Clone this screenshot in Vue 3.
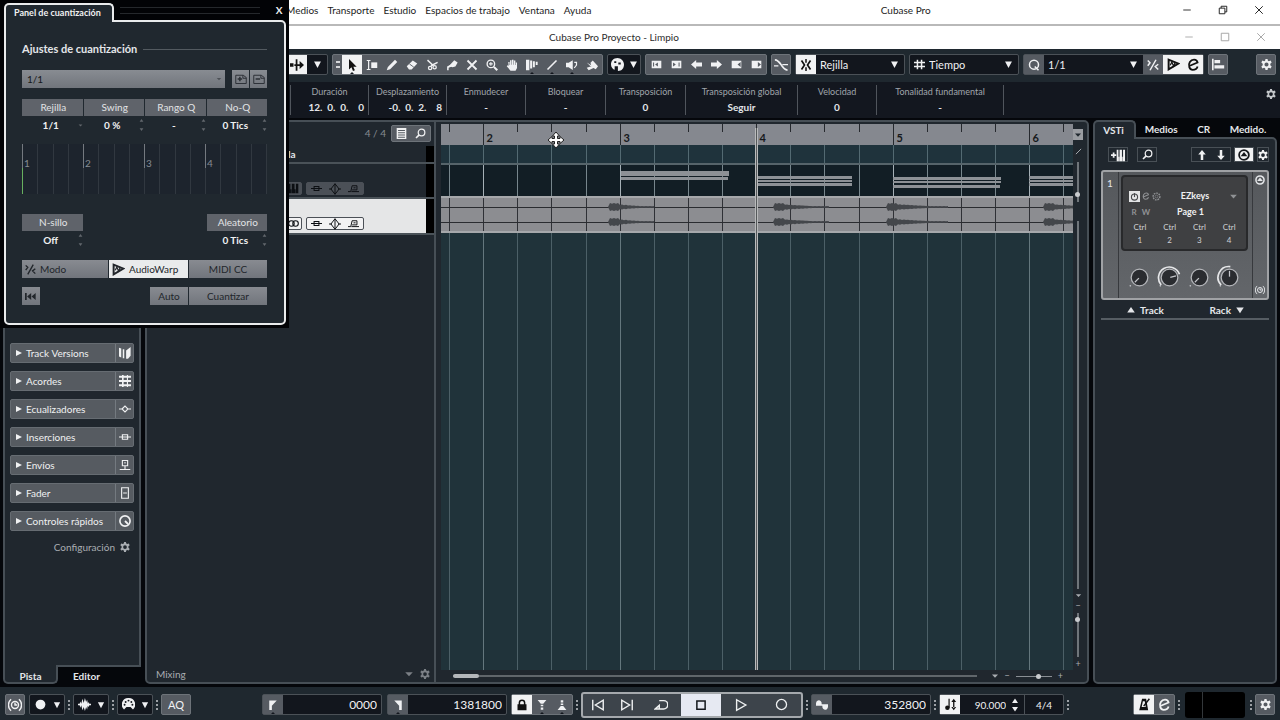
<script setup>
import { ref, computed, h, onMounted, onUnmounted } from 'vue';

const line = 'fill="none" stroke="currentColor"';

// 16x16 glyphs, drawn in the current text colour
const glyphs = {
  down: '<path d="M3 3.5h10L8 13z"/>',
  right: '<path d="M2 2l12 6-12 6z"/>',
  up: '<path d="M2 12h12L8 3z"/>',
  downWide: '<path d="M2 4h12L8 13z"/>',
  caret: '<path d="M2 5h12L8 11.5z"/>',
  autoscroll: '<path d="M0 6h4v4H0zM5 7h6V3.500L16 8l-5 4.500V9H5zM6.500 1.500h2v13h-2z"/>',
  pointer: '<path d="M4 0v14l3.300-3 2 5 2.500-1-2-4.800h4.400z"/>',
  range: `<path ${line} stroke-width="1.600" d="M1 2h5M1 14h5M3.500 2v12"/><path d="M7 4.500h8v7.500H7z"/>`,
  pencil: '<path d="M1 15l1.500-4.500L12 1l3 3L5.500 13.500z"/>',
  eraser: '<path d="M1 9.500L9 2l6 4-7.500 8H4z"/><path stroke="#575c63" stroke-width="1.200" d="M4.500 6.500l6 4.500"/>',
  scissors: `<path ${line} stroke-width="1.900" d="M2 1.500l8 7.500M15.500 4.500L6.500 9"/><circle ${line} stroke-width="1.700" cx="11.500" cy="11" r="2.200"/><circle ${line} stroke-width="1.700" cx="5.500" cy="12" r="2.200"/>`,
  glue: '<path d="M7 6l4-4.500 4.500 3-3 5.500-4 1-4-2z"/><path d="M7 7l-5.500 3V15H3.500v-3.500L8 10z"/>',
  cross: `<path ${line} stroke-width="2.400" d="M2 2l12 12M14 2L2 14"/>`,
  zoom: `<circle ${line} stroke-width="1.800" cx="6.500" cy="6.500" r="5"/><path ${line} stroke-width="2.800" d="M10.500 10.500l4.500 4.500"/><path ${line} stroke-width="1.400" d="M4 6.500h5M6.500 4v5"/>`,
  hand: '<path d="M3 4h1.800v4h.6V1.800h2V7.500H8V1h2v6.500h.6V2h1.900v6h.6V4.500h1.600V12l-2 3.500H6L1 9.500l1-1.300L3.500 9z"/>',
  comp: '<path d="M0 1h4.500v14H0zM5.500 2h2.700v10.500H5.500zM9.200 3h2.600v8H9.200zM13 3.500h2.500V8H13z"/>',
  stroke: `<path ${line} stroke-width="2.200" d="M2 14L14 2"/>`,
  speaker: `<path d="M0 5h3.500L9 1.500v13L3.500 11H0z"/><path ${line} stroke-width="1.600" d="M11 4.500h3V8l-3 4"/>`,
  paint: '<path d="M6 5l3-3 7 7.500-3 4-3-1.500-6.500 3L1 11.500l6-2z"/><path d="M1 4.500l6.500 4-1.500 1z"/>',
  palette: '<path d="M8 0C3 0 0 3.500 0 8c0 3.500 2.500 6 4.500 6.500V10h4v6c5 0 7.500-3.500 7.500-8S12 0 8 0z"/><path fill="#12161d" d="M9 5.500h3v2.500H9zM4 4h2.500v2H4z"/>',
  boxIn: '<path fill-rule="evenodd" d="M1 2.500h14v11H1zM10 5L6 8l4 3zM3 5v6h1.500V5z"/>',
  boxOut: '<path fill-rule="evenodd" d="M1 2.500h14v11H1zM3 5l4 3-4 3zM11 5v6h1.500V5z"/>',
  arrowLeft: '<path d="M0 8l7.500-6.500V5H16v6H7.500v3.500z"/>',
  arrowRight: '<path d="M16 8L8.500 1.500V5H0v6h8.500v3.500z"/>',
  trimLeft: '<path fill-rule="evenodd" d="M1 2.500h14v11H1zM14 4.500L9.500 8l4.500 3.500z"/>',
  trimRight: '<path fill-rule="evenodd" d="M1 2.500h14v11H1zM10 4.500v7L14.500 8z"/>',
  crossfade: `<path ${line} stroke-width="2" d="M1 2c4 0 6 4 8 7s4 4.500 6.500 5"/><path ${line} stroke-width="1.500" d="M9.500 7.500H16M0 9h5"/>`,
  snap: `<path ${line} stroke-width="2.200" d="M2 2l4 6-4 6M14 2l-4 6 4 6"/><path d="M7 0h2v5H7zM7 11h2v5H7z"/>`,
  hash: `<path ${line} stroke-width="2.200" d="M5 1v14M11 1v14M0 5h16M0 11h16"/>`,
  q: `<circle ${line} stroke-width="2" cx="8" cy="7.500" r="6"/><path ${line} stroke-width="2.200" d="M9 10l5 5"/>`,
  iterative: `<path ${line} stroke-width="2" d="M1 2l3 3-3 4M12 1L4 15M15 7l-4 3 4 4"/>`,
  warp: `<path ${line} stroke-width="2.400" d="M2 14V2l12 5z"/><path ${line} stroke-width="1.500" d="M4 9l2-4 2 5 2-4"/>`,
  e: `<path ${line} stroke-width="2.200" d="M3.500 9.500L13 5.500C12 1 6 1 3.500 5S3 14.500 7 14.500s5.500-2 6-4"/>`,
  align: '<path d="M0 1h2v14H0zM3 2.500h7v4H3zM3 9h12v4H3z"/>',
  gear: '<path fill-rule="evenodd" d="M6.500 0h3l.5 2.500 1.500.8L14 2.300 15.500 5l-2 1.800v2.400l2 1.800-1.500 2.700-2.500-1-1.500.8-.5 2.500h-3L6 13.500l-1.500-.8-2.500 1L.5 11l2-1.800V6.800L.5 5 2 2.300l2.500 1L6 2.500zM8 5a3 3 0 100 6 3 3 0 000-6z"/>',
  minimize: `<path ${line} stroke-width="1.400" d="M2 8h12"/>`,
  restore: `<path ${line} stroke-width="1.500" d="M2 5h9v9H2zM5 5V2h9v9h-3"/>`,
  maximize: `<path ${line} stroke-width="1.500" d="M2 2h12v12H2z"/>`,
  close: `<path ${line} stroke-width="1.500" d="M2 2l12 12M14 2L2 14"/>`,
  presetAdd: `<path ${line} stroke-width="1.300" d="M1 3h10l4 3v8H1zM10.500 3v4H15"/><path ${line} stroke-width="2" d="M3.500 8h6M6.500 5v6"/>`,
  presetRemove: `<path ${line} stroke-width="1.300" d="M1 3h10l4 3v8H1zM10.500 3v4H15"/><path ${line} stroke-width="2" d="M3.500 8h6"/>`,
  rewind: '<path d="M0 3h2.500v10H0zM3 8l6-5v10zM9.500 8l6-5v10z"/>',
  versions: '<path d="M0 1l3 1v12l-3-1.500zM5 3h2v12H5zM9.500 4.500L15.500 0v11.500L12 15.500H9.500z"/>',
  chords: '<path d="M0 1h16v2.600H0zM0 6.700h16v2.600H0zM0 12.400h16V15H0zM4 0h2.200v16H4zM10.500 0h1.500v16h-1.500z"/>',
  eq: `<path ${line} stroke-width="1.500" d="M0 8h4M12 8h4M4 8l4-4 4 4-4 4z"/>`,
  insert: `<path ${line} stroke-width="1.500" d="M0 8h4.500M11.500 8H16M4.500 5h7v6h-7zM5 8h6"/>`,
  send: `<path ${line} stroke-width="1.500" d="M4.500 2h7v7h-7zM8 9v5M1 14h14M8 4v2"/>`,
  fader: `<path ${line} stroke-width="1.500" d="M3.500 1h9v14h-9zM5.500 8h5"/>`,
  knob: `<circle ${line} stroke-width="2.200" cx="8" cy="8" r="6.800"/><path ${line} stroke-width="2.400" d="M8 8l4 4"/>`,
  keys: '<path fill-rule="evenodd" d="M0 1h15v14H0zM3.500 1v8h2V1zM9.500 1v8h2V1zM4.300 9v6h.5V9zM10.300 9v6h.5V9z"/>',
  addKeys: `<path ${line} stroke-width="2" d="M0 8h6M3 5v6"/><path fill-rule="evenodd" d="M6.500 2H16v13H6.500zM8.500 2v8h1.300V2zM12.500 2v8h1.300V2zM9 10v5h.4v-5zM13 10v5h.4v-5z"/>`,
  search: `<circle ${line} stroke-width="1.800" cx="9.500" cy="6.500" r="4.800"/><path ${line} stroke-width="2.400" d="M6 10l-4.500 4.500"/>`,
  list: '<path fill-rule="evenodd" d="M1 0h14v16H1zM3 3v1.500h10V3zM3 6.300v1.500h10V6.300zM3 9.500V11h10V9.500zM3 12.700V14h10v-1.300z"/>',
  arrowUp: '<path d="M8 0l6 7h-4v9H6V7H2z"/>',
  arrowDown: '<path d="M8 16l6-7h-4V0H6v9H2z"/>',
  eject: `<circle ${line} stroke-width="2.400" cx="8" cy="8" r="6.500"/><path d="M3.500 9.500h9L8 4z"/>`,
  ringGear: `<circle ${line} stroke-width="2.500" stroke-dasharray="3 1.500" cx="8" cy="8" r="6"/><circle ${line} cx="8" cy="8" r="2.500"/>`,
  channelEq: `<path ${line} stroke-width="1.300" d="M0 8h4M12 8h4M8 1l5.500 7L8 15 2.500 8zM8 1v14"/>`,
  channelSend: `<path ${line} stroke-width="1.400" d="M0 12.500h4L6 4h7v6H6M5 12.500h11M8 7h3"/>`,
  stereo: `<circle ${line} stroke-width="1.600" cx="5" cy="8" r="4"/><circle ${line} stroke-width="1.600" cx="11" cy="8" r="4"/>`,
  clock: `<circle ${line} stroke-width="1.600" cx="8" cy="8" r="4"/><path ${line} stroke-width="1.600" d="M8 5.500V8h2.500M3.500 1.500c-4 3.500-4 9.500 0 13M12.500 1.500c4 3.500 4 9.500 0 13"/>`,
  dot: '<circle cx="8" cy="8" r="6"/>',
  wave: '<path d="M0 7.200h2l1-3 1 3L5.500 1 7 6l1.500-6L10 5l1.200-3 1 5L13 5l1 2.200h2v1.600h-2L13 11l-1-1.500-.8 4.500L10 11l-1.500 5L7 11l-1.500 4L4 9l-1 3-1-3.200H0z"/>',
  midi: '<path d="M8 0a8 8 0 00-5.500 14l3-3h5l3 3A8 8 0 008 0z"/><g fill="#12161d"><circle cx="8" cy="3.200" r="1.200"/><circle cx="4.500" cy="4.800" r="1.200"/><circle cx="11.500" cy="4.800" r="1.200"/><circle cx="3.200" cy="8.200" r="1.200"/><circle cx="12.800" cy="8.200" r="1.200"/></g>',
  locLeft: '<path d="M3 2h10L6.500 9v5.500H3z"/>',
  locRight: '<path d="M13 2H3l6.500 7v5.500H13z"/>',
  lock: `<path d="M2 7h12v8H2z"/><path ${line} stroke-width="2" d="M4.500 8V5a3.500 3.500 0 017 0v3"/>`,
  punchIn: '<path d="M1 0h14L10 6H6zM6 7.500h4v2.500H6zM6 12h4v3.500H6z"/>',
  punchOut: '<path d="M1 16h14L10 9.500H6zM6 5.500h4V8H6zM6 .5h4V4H6z"/>',
  toStart: `<path ${line} stroke-width="1.600" d="M2 2v12M14 2.500v11L5 8z"/>`,
  toEnd: `<path ${line} stroke-width="1.600" d="M14 2v12M2 2.500v11L11 8z"/>`,
  cycle: `<path ${line} stroke-width="1.700" d="M6 3h5a4.200 4.200 0 010 9.500H1.500L6 8.500v4"/>`,
  stop: `<path ${line} stroke-width="2" d="M2.500 2.500h11v11h-11z"/>`,
  play: `<path ${line} stroke-width="1.600" d="M3 2l10.500 6L3 14z"/>`,
  record: `<circle ${line} stroke-width="1.600" cx="8" cy="8" r="6.200"/>`,
  sine: '<path d="M0 9V5.500C1 .5 6.500.5 7.500 5V7H16v3.500c-1 5-6.500 5-7.500.500V9z"/>',
  tempo: '<path d="M5.500 1H7v11H5.500z"/><circle cx="4.200" cy="12" r="2.800"/><path d="M12 1l3 4H9zM12 15l3-4H9zM11.200 4h1.600v8h-1.600z"/>',
  metronome: `<path fill-rule="evenodd" d="M5 1h5l2.500 14h-11zM6 4L4.500 11h5L8.300 4z"/><path ${line} stroke-width="1.800" d="M7 10l7-9"/>`,
  move: '<path fill="#fff" stroke="#222" d="M8 0l3.500 4H9.500v2.500H12v-2L16 8l-4 3.500v-2H9.500V12h2L8 16l-3.500-4h2V9.500H4v2L0 8l4-3.500v2h2.500V4h-2z"/>',
  power: `<circle ${line} stroke-width="2" cx="8" cy="9" r="5.500"/><path ${line} stroke-width="2" d="M8 2v7"/>`,
};

const Icon = (props) =>
  h('svg', {
    class: 'icon',
    viewBox: '0 0 16 16',
    width: props.size || 12,
    height: props.size || 12,
    fill: 'currentColor',
    'aria-hidden': 'true',
    innerHTML: glyphs[props.name],
  });
Icon.props = ['name', 'size'];

const menus = ['Medios', 'Transporte', 'Estudio', 'Espacios de trabajo', 'Ventana', 'Ayuda'];

const tool = ref('pointer');
const tools = [
  { icon: 'pointer', label: 'Seleccionar' },
  { icon: 'range', label: 'Rango' },
  { icon: 'pencil', label: 'Dibujar' },
  { icon: 'eraser', label: 'Borrar' },
  { icon: 'scissors', label: 'Dividir' },
  { icon: 'glue', label: 'Pegar' },
  { icon: 'cross', label: 'Enmudecer' },
  { icon: 'zoom', label: 'Zoom' },
  { icon: 'hand', label: 'Mano' },
  { icon: 'comp', label: 'Comp', more: true },
  { icon: 'stroke', label: 'Línea', more: true },
  { icon: 'speaker', label: 'Reproducir', more: true },
  { icon: 'paint', label: 'Color' },
];
const nudges = ['boxIn', 'boxOut', 'arrowLeft', 'arrowRight', 'trimLeft', 'trimRight'];

const info = [
  { label: 'Duración', value: '12.  0.  0.    0', width: 78, right: true },
  { label: 'Desplazamiento', value: '-0.  0.  2.    8', width: 78, right: true },
  { label: 'Enmudecer', value: '-', width: 79 },
  { label: 'Bloquear', value: '-', width: 80 },
  { label: 'Transposición', value: '0', width: 80 },
  { label: 'Transposición global', value: 'Seguir', width: 112 },
  { label: 'Velocidad', value: '0', width: 79 },
  { label: 'Tonalidad fundamental', value: '-', width: 127 },
];

const sections = [
  { label: 'Track Versions', icon: 'versions' },
  { label: 'Acordes', icon: 'chords' },
  { label: 'Ecualizadores', icon: 'eq' },
  { label: 'Inserciones', icon: 'insert' },
  { label: 'Envíos', icon: 'send' },
  { label: 'Fader', icon: 'fader' },
  { label: 'Controles rápidos', icon: 'knob' },
];

const quantize = [
  { label: 'Rejilla', value: '1/1', drop: true },
  { label: 'Swing', value: '0 %' },
  { label: 'Rango Q', value: '-' },
  { label: 'No-Q', value: '0 Tics' },
];

// One beat every quarter of a bar; the first visible beat is 1.4
const beatWidth = 34.125;
const timeline = ref(null);
const timelineWidth = ref(632);
const beats = computed(() =>
  Array.from({ length: Math.ceil((timelineWidth.value - 8) / beatWidth) }, (_, i) => ({
    x: Math.round(8 + i * beatWidth) + 0.5,
    bar: i % 4 === 1,
    number: Math.floor((i + 7) / 4),
  })),
);

function measure() {
  timelineWidth.value = timeline.value.clientWidth;
}
onMounted(() => {
  measure();
  window.addEventListener('resize', measure);
});
onUnmounted(() => window.removeEventListener('resize', measure));

const notes = [
  { x: 180, y: 6, w: 108, h: 5 },
  { x: 180, y: 12, w: 107, h: 3 },
  { x: 316, y: 11, w: 95, h: 3 },
  { x: 316, y: 15, w: 95, h: 2 },
  { x: 316, y: 18, w: 95, h: 3 },
  { x: 452, y: 12, w: 108, h: 3 },
  { x: 452, y: 16, w: 108, h: 2 },
  { x: 452, y: 20, w: 107, h: 3 },
  { x: 588, y: 11, w: 95, h: 3 },
  { x: 588, y: 15, w: 95, h: 2 },
  { x: 588, y: 18, w: 95, h: 3 },
];

function burst(x, y, width) {
  let top = `M${x} ${y}`;
  let bottom = '';
  for (let i = 2; i <= width; i += 2) {
    const level = i < 12 ? 4 : Math.max(1, 3.5 * (1 - i / width));
    const amp = level * (i % 4 ? 1 : 0.8);
    top += `L${x + i} ${y - amp}`;
    bottom = `L${x + i} ${y + amp}` + bottom;
  }
  return top + bottom + 'z';
}
const hits = [
  { x: 167, w: 46 },
  { x: 332, w: 56 },
  { x: 445, w: 62 },
  { x: 602, w: 50 },
];
const waves = hits.flatMap(hit => [burst(hit.x, 9, hit.w), burst(hit.x, 24, hit.w)]);

const knobs = [
  { arc: '', angle: 225 },
  { arc: 'M5 24A13 13 0 1 1 27 11', angle: 75 },
  { arc: '', angle: 225 },
  { arc: 'M5 24A13 13 0 0 1 16 2', angle: 0 },
];

const grid = ref('Rejilla');
const gridType = ref('Tiempo');
const preset = ref('1/1');
const panelOpen = ref(true);
const leftLocator = ref('0000');
const rightLocator = ref('1381800');
const position = ref('352800');
const tempo = ref('90.000');
</script>

<template>
  <div class="app">
    <header class="menubar">
      <nav class="menus">
        <a v-for="menu in menus" :key="menu" href="#">{{ menu }}</a>
      </nav>
      <span class="app-name">Cubase Pro</span>
      <div class="window-buttons">
        <button aria-label="Minimizar"><Icon name="minimize" :size="10" /></button>
        <button aria-label="Restaurar"><Icon name="restore" :size="10" /></button>
        <button aria-label="Cerrar"><Icon name="close" :size="10" /></button>
      </div>
    </header>

    <div class="titlebar">
      <h1>Cubase Pro Proyecto - Limpio</h1>
      <div class="window-buttons dim">
        <button aria-label="Minimizar proyecto"><Icon name="minimize" :size="10" /></button>
        <button aria-label="Maximizar proyecto"><Icon name="maximize" :size="10" /></button>
        <button aria-label="Cerrar proyecto"><Icon name="close" :size="10" /></button>
      </div>
    </div>

    <div class="toolbar">
      <div class="group dark">
        <button class="cell on" aria-label="Autodesplazamiento"><Icon name="autoscroll" :size="14" /></button>
        <button class="cell" aria-label="Opciones de desplazamiento"><Icon name="down" :size="11" /></button>
      </div>
      <div class="group">
        <span class="handle"></span>
        <button
          v-for="item in tools"
          :key="item.icon"
          class="cell"
          :class="{ on: tool === item.icon, more: item.more || tool === item.icon }"
          :aria-label="item.label"
          @click="tool = item.icon"
        >
          <Icon :name="item.icon" />
        </button>
      </div>
      <div class="group dark colors">
        <button class="cell" aria-label="Colores"><Icon name="palette" :size="13" /></button>
        <button class="cell narrow" aria-label="Menú de colores"><Icon name="down" :size="11" /></button>
      </div>
      <div class="group">
        <button v-for="nudge in nudges" :key="nudge" class="cell" :aria-label="nudge"><Icon :name="nudge" :size="11" /></button>
      </div>
      <div class="group">
        <button class="cell" aria-label="Fundido cruzado"><Icon name="crossfade" :size="14" /></button>
      </div>
      <div class="group dark">
        <button class="cell on" aria-label="Ajuste"><Icon name="snap" /></button>
        <label class="drop snap">
          <select v-model="grid" aria-label="Tipo de ajuste"><option>Rejilla</option></select>
          <Icon name="down" :size="11" />
        </label>
      </div>
      <div class="group dark">
        <label class="drop grid-type">
          <Icon name="hash" :size="11" />
          <select v-model="gridType" aria-label="Tipo de rejilla"><option>Tiempo</option></select>
          <Icon name="down" :size="11" />
        </label>
      </div>
      <div class="group dark">
        <button class="cell raised" aria-label="Cuantizar"><Icon name="q" /></button>
        <label class="drop preset">
          <select v-model="preset" aria-label="Preset de cuantización"><option>1/1</option></select>
          <Icon name="down" :size="11" />
        </label>
        <button class="cell raised" aria-label="Cuantización iterativa"><Icon name="iterative" /></button>
        <button class="cell on" aria-label="AudioWarp"><Icon name="warp" :size="13" /></button>
        <button class="cell on" aria-label="Abrir panel" @click="panelOpen = true"><Icon name="e" :size="13" /></button>
      </div>
      <div class="group">
        <button class="cell" aria-label="Alinear"><Icon name="align" :size="13" /></button>
      </div>
      <div class="group push">
        <button class="cell" aria-label="Configurar barra"><Icon name="gear" :size="11" /></button>
      </div>
    </div>

    <div class="infoline">
      <dl>
        <div v-for="item in info" :key="item.label" :style="{ width: item.width + 'px' }">
          <dt>{{ item.label }}</dt>
          <dd :class="{ right: item.right }">{{ item.value }}</dd>
        </div>
      </dl>
      <button class="plain" aria-label="Configurar línea de información"><Icon name="gear" :size="10" /></button>
    </div>

    <main class="workspace">
      <aside class="inspector">
        <div class="inspector-body">
          <button v-for="section in sections" :key="section.label" class="section">
            <Icon name="right" :size="8" />
            <span>{{ section.label }}</span>
            <i><Icon :name="section.icon" :size="12" /></i>
          </button>
          <button class="config">Configuración <Icon name="gear" :size="10" /></button>
        </div>
        <div class="bottom-tabs">
          <button class="active">Pista</button>
          <button>Editor</button>
        </div>
      </aside>

      <section class="project">
        <div class="tracks">
          <div class="tracks-head">
            <span>4 / 4</span>
            <div class="mini-group">
              <button aria-label="Lista de pistas"><Icon name="list" :size="11" /></button>
              <button aria-label="Buscar pistas"><Icon name="search" :size="11" /></button>
            </div>
          </div>
          <div class="track folder">la</div>
          <div class="track midi">
            <span class="chip"><Icon name="keys" :size="11" /></span>
            <span class="chip wide"><Icon name="insert" :size="11" /><Icon name="channelEq" /><Icon name="channelSend" :size="11" /></span>
          </div>
          <div class="track audio">
            <span class="chip"><Icon name="stereo" :size="11" /></span>
            <span class="chip wide"><Icon name="insert" :size="11" /><Icon name="channelEq" /><Icon name="channelSend" :size="11" /></span>
          </div>
          <div class="tracks-foot">
            <span>Mixing</span>
            <Icon name="caret" :size="10" />
            <Icon name="gear" :size="10" />
          </div>
        </div>

        <div class="arrange">
          <div ref="timeline" class="timeline">
            <svg class="ruler">
              <g v-for="beat in beats" :key="beat.x">
                <line :x1="beat.x" y1="0" :x2="beat.x" :y2="beat.bar ? 21 : 8" stroke="#26292e" />
                <text v-if="beat.bar" :x="beat.x + 3" y="18">{{ beat.number }}</text>
              </g>
            </svg>
            <svg class="lane marker">
              <line v-for="beat in beats" :key="beat.x" :x1="beat.x" y1="0" :x2="beat.x" y2="100%" stroke="#536a72" />
            </svg>
            <svg class="lane notes">
              <line v-for="beat in beats" :key="beat.x" :x1="beat.x" y1="0" :x2="beat.x" y2="100%" :stroke="beat.bar ? '#a5b0b6' : '#77868c'" />
              <rect v-for="(note, i) in notes" :key="i" :x="note.x" :y="note.y" :width="note.w" :height="note.h" fill="#8d9196" />
            </svg>
            <svg class="lane clip">
              <line v-for="beat in beats" :key="beat.x" :x1="beat.x" y1="0" :x2="beat.x" y2="100%" stroke="#2f3136" />
              <path d="M0 9.500H2000M0 24.500H2000" stroke="#2a2c30" />
              <path v-for="(wave, i) in waves" :key="i" :d="wave" fill="#44474b" />
            </svg>
            <svg class="lane empty">
              <line v-for="beat in beats" :key="beat.x" :x1="beat.x" y1="0" :x2="beat.x" y2="100%" :stroke="beat.bar ? '#64777d' : '#4c6067'" />
            </svg>
            <span class="playhead"></span>
            <span class="cursor"><Icon name="move" :size="16" /></span>
          </div>
          <div class="vzoom">
            <button class="ruler-menu" aria-label="Formato de regla"><Icon name="caret" :size="8" /></button>
            <Icon name="stroke" :size="7" />
            <span class="vline short"><b></b></span>
            <span class="vline long"></span>
            <Icon name="caret" :size="7" />
            <small>−</small>
            <span class="vline zoomer"><b></b></span>
            <small>+</small>
          </div>
          <div class="hzoom">
            <span class="hscroll"><b></b></span>
            <Icon name="caret" :size="8" />
            <small>−</small>
            <span class="hline"><b></b></span>
            <small>+</small>
          </div>
        </div>
      </section>

      <aside class="rack">
        <nav class="rack-tabs">
          <button class="active">VSTi</button>
          <button>Medios</button>
          <button>CR</button>
          <button>Medido.</button>
        </nav>
        <div class="rack-body">
          <div class="rack-tools">
            <button aria-label="Añadir instrumento"><Icon name="addKeys" :size="14" /></button>
            <button aria-label="Buscar instrumento"><Icon name="search" :size="11" /></button>
            <span class="pair">
              <button aria-label="Anterior"><Icon name="arrowUp" :size="10" /></button>
              <button aria-label="Siguiente"><Icon name="arrowDown" :size="10" /></button>
            </span>
            <button class="on" aria-label="Mostrar controles"><Icon name="eject" /></button>
            <button class="slim" aria-label="Ajustes del rack"><Icon name="gear" :size="10" /></button>
          </div>
          <article class="device">
            <span class="number">1</span>
            <div class="face">
              <div class="screen">
                <div class="screen-row">
                  <button class="lit" aria-label="Activar"><Icon name="power" :size="9" /></button>
                  <Icon name="e" :size="8" />
                  <Icon name="ringGear" :size="9" />
                  <strong>EZkeys</strong>
                  <Icon name="caret" :size="9" />
                </div>
                <div class="screen-row second">
                  <b>R</b><b>W</b><strong>Page 1</strong>
                </div>
                <ol>
                  <li v-for="n in 4" :key="n"><span>Ctrl</span><span>{{ n }}</span></li>
                </ol>
              </div>
              <div class="knobs">
                <svg v-for="(knob, i) in knobs" :key="i" viewBox="0 0 30 30" width="25" height="25">
                  <path :d="knob.arc" fill="none" stroke="#e6e7e9" stroke-width="2" />
                  <circle cx="15" cy="15" r="10" fill="#2a2c30" stroke="#b4b6ba" stroke-width="1.500" />
                  <line x1="15" y1="14" x2="15" y2="7" stroke="#c4c6ca" stroke-width="1.500" :transform="`rotate(${knob.angle} 15 15)`" />
                  <circle cx="4" cy="25" r="1" fill="#c4c6ca" />
                </svg>
              </div>
            </div>
            <div class="side">
              <Icon name="eject" :size="10" />
              <Icon name="clock" :size="10" />
            </div>
          </article>
          <div class="rack-foot">
            <button><Icon name="up" :size="10" /> Track</button>
            <button>Rack <Icon name="downWide" :size="10" /></button>
          </div>
        </div>
      </aside>
    </main>

    <footer class="transport">
      <div class="group"><button class="cell" aria-label="Compensación de retardo"><Icon name="clock" :size="14" /></button></div>
      <template v-for="mode in ['dot', 'wave', 'midi']" :key="mode">
        <div class="group dark">
          <button class="cell" :aria-label="mode"><Icon :name="mode" :size="13" /></button>
          <button class="cell narrow" :aria-label="mode + ' menú'"><Icon name="down" :size="10" /></button>
        </div>
        <span class="dots"></span>
      </template>
      <div class="group aq"><button class="cell">AQ</button></div>

      <div class="group dark locator first">
        <button class="cell raised more" aria-label="Ir al localizador izquierdo"><Icon name="locLeft" /></button>
        <input v-model="leftLocator" aria-label="Localizador izquierdo">
      </div>
      <div class="group dark locator">
        <button class="cell raised more" aria-label="Ir al localizador derecho"><Icon name="locRight" /></button>
        <input v-model="rightLocator" aria-label="Localizador derecho">
      </div>
      <div class="group">
        <button class="cell on" aria-label="Bloquear localizadores"><Icon name="lock" /></button>
        <button class="cell more" aria-label="Punch in"><Icon name="punchIn" :size="10" /></button>
        <button class="cell more" aria-label="Punch out"><Icon name="punchOut" :size="10" /></button>
      </div>
      <span class="dots"></span>
      <div class="play-controls">
        <button class="small" aria-label="Ir al inicio"><Icon name="toStart" :size="14" /></button>
        <button class="small" aria-label="Ir al final"><Icon name="toEnd" :size="14" /></button>
        <button aria-label="Ciclo"><Icon name="cycle" :size="14" /></button>
        <button class="active" aria-label="Detener"><Icon name="stop" /></button>
        <button aria-label="Reproducir"><Icon name="play" :size="14" /></button>
        <button aria-label="Grabar"><Icon name="record" :size="13" /></button>
      </div>
      <span class="dots"></span>
      <div class="group dark locator">
        <button class="cell raised" aria-label="Formato de tiempo"><Icon name="sine" /></button>
        <input v-model="position" aria-label="Posición">
      </div>
      <span class="dots"></span>
      <div class="group dark tempo">
        <button class="cell on" aria-label="Pista de tempo"><Icon name="tempo" :size="13" /></button>
        <input v-model="tempo" aria-label="Tempo">
        <span class="spin"><Icon name="up" :size="8" /><Icon name="downWide" :size="8" /></span>
        <button class="signature">4/4</button>
      </div>
      <span class="dots"></span>
      <div class="group push">
        <button class="cell on" aria-label="Metrónomo"><Icon name="metronome" :size="13" /></button>
        <button class="cell" aria-label="Ajustes de metrónomo"><Icon name="e" :size="13" /></button>
      </div>
      <span class="dots"></span>
      <div class="meter"><i></i></div>
      <span class="dots"></span>
      <div class="group"><button class="cell" aria-label="Configurar transporte"><Icon name="gear" :size="11" /></button></div>
    </footer>

    <section v-if="panelOpen" class="panel">
      <div class="panel-head">
        <h2>Panel de cuantización</h2>
        <span class="grip"></span>
        <button class="panel-close" @click="panelOpen = false">X</button>
      </div>
      <div class="panel-body">
        <h3>Ajustes de cuantización</h3>
        <div class="preset-row">
          <label class="preset-select">
            <select v-model="preset" aria-label="Preset"><option>1/1</option></select>
            <Icon name="caret" :size="6" />
          </label>
          <div class="preset-buttons">
            <button aria-label="Guardar preset"><Icon name="presetAdd" /></button>
            <button aria-label="Eliminar preset"><Icon name="presetRemove" /></button>
          </div>
        </div>
        <div class="params">
          <div v-for="item in quantize" :key="item.label" class="param">
            <span>{{ item.label }}</span>
            <button>
              <strong>{{ item.value }}</strong>
              <Icon v-if="item.drop" name="caret" :size="5" />
              <i v-else><Icon name="up" :size="5" /><Icon name="downWide" :size="5" /></i>
            </button>
          </div>
        </div>
        <div class="beat-grid">
          <span v-for="n in 16" :key="n" :class="{ strong: n % 4 === 1 }">{{ n % 4 === 1 ? (n + 3) / 4 : '' }}</span>
        </div>
        <div class="params spread">
          <div class="param">
            <span>N-sillo</span>
            <button><strong>Off</strong><i><Icon name="up" :size="5" /><Icon name="downWide" :size="5" /></i></button>
          </div>
          <div class="param">
            <span>Aleatorio</span>
            <button><strong>0 Tics</strong><i><Icon name="up" :size="5" /><Icon name="downWide" :size="5" /></i></button>
          </div>
        </div>
        <div class="modes">
          <button class="mode"><Icon name="iterative" :size="11" /> Modo</button>
          <button class="mode active"><Icon name="warp" :size="13" /> AudioWarp</button>
          <button class="mode center">MIDI CC</button>
        </div>
        <div class="actions">
          <button class="reset" aria-label="Restablecer cuantización"><Icon name="rewind" :size="11" /></button>
          <button class="auto">Auto</button>
          <button class="apply">Cuantizar</button>
        </div>
      </div>
    </section>
  </div>
</template>

<style>
body {
  background: #05070a;
}
</style>

<style scoped>
.app {
  position: relative;
  display: flex;
  flex-direction: column;
  min-height: 100vh;
  overflow: hidden;
  background: #05070b;
  color: #e4e6e9;
  font: 10px/14px "Lato", "Open Sans", sans-serif;
}

* {
  box-sizing: border-box;
}

button,
input,
select {
  margin: 0;
  padding: 0;
  border: 0;
  border-radius: 0;
  background: none;
  color: inherit;
  font: inherit;
  appearance: none;
}

.icon {
  flex: none;
  display: block;
}

/* window chrome */
.menubar,
.titlebar {
  display: flex;
  align-items: center;
  justify-content: space-between;
  background: #fff;
  color: #1c1c1c;
}

.menubar {
  height: 26px;
  padding-bottom: 4px;
  border-bottom: 2px solid #b9b9b9;
}

.menus {
  flex: none;
  display: flex;
  gap: 9px;
  padding-left: 286px;
}

.menus a {
  color: inherit;
  text-decoration: none;
}

.app-name {
  flex: 1;
  padding-left: 38px;
  text-align: center;
}

.window-buttons {
  flex: none;
  display: flex;
  gap: 26px;
  padding-right: 16px;
}

.dim {
  color: #a3a3a3;
}

.titlebar {
  height: 23px;
  padding-bottom: 2px;
  color: #2b2b2b;
}

.titlebar h1 {
  flex: none;
  margin: 0;
  padding-left: 549px;
  font-size: 10px;
  font-weight: 400;
}

.titlebar .window-buttons {
  padding-right: 14px;
}

/* toolbar */
.toolbar {
  display: flex;
  align-items: center;
  gap: 4px;
  height: 33px;
  padding: 0 4px 2px 286px;
  background: #1f282f;
}

.group {
  flex: none;
  display: flex;
  align-items: stretch;
  height: 21px;
  border: 1px solid #6d7379;
  border-radius: 2px;
  background: #565b62;
  color: #f0f1f3;
}

.group.dark {
  background: #12161d;
  border-color: #4b5157;
}

.push {
  margin-left: auto;
}

.cell {
  position: relative;
  display: flex;
  align-items: center;
  justify-content: center;
  width: 20px;
}

.group > .cell:only-child,
.colors .cell {
  width: 18px;
}

.cell.narrow,
.colors .cell.narrow {
  width: 14px;
}

.cell.on {
  background: #f1f2f3;
  color: #111;
}

.cell.raised {
  background: #565b62;
}

.cell.more::after {
  content: "";
  position: absolute;
  bottom: 0;
  border: 2px solid transparent;
  border-bottom-color: #12161d;
}

.handle {
  width: 4px;
  margin: 6px 2px 6px 3px;
  border-top: 2px solid #d5d7d9;
  border-bottom: 2px solid #d5d7d9;
}

.drop {
  display: flex;
  align-items: center;
  gap: 4px;
  padding: 0 4px;
}

.drop select {
  flex: 1;
  min-width: 0;
  font-size: 11px;
}

.drop.snap {
  width: 88px;
}

.drop.grid-type {
  width: 108px;
}

.drop.preset {
  width: 99px;
}

.infoline {
  display: flex;
  align-items: flex-start;
  justify-content: space-between;
  height: 36px;
  padding: 0 4px 0 290px;
  background: #13171f;
}

.infoline dl {
  display: flex;
  margin: 3px 0;
  border-left: 1px solid #50555c;
}

.infoline dl div {
  height: 30px;
  padding: 0 4px;
  border-right: 1px solid #50555c;
  text-align: center;
}

.infoline dt {
  color: #a0a5ab;
  font-size: 9px;
  white-space: nowrap;
}

.infoline dd {
  margin: 1px 0 0;
  font-weight: 700;
  white-space: pre;
}

.infoline dd.right {
  text-align: right;
}

.infoline .plain {
  padding-top: 7px;
  color: #c3c6c9;
}

/* workspace */
.workspace {
  flex: 1;
  display: flex;
  gap: 4px;
  padding: 2px 3px 3px;
}

.inspector {
  flex: none;
  display: flex;
  flex-direction: column;
  width: 138px;
}

.inspector-body {
  flex: 1;
  display: flex;
  flex-direction: column;
  gap: 8px;
  padding: 221px 5px 0;
  border: 2px solid #474f56;
  border-bottom: 0;
  border-radius: 5px 5px 0 0;
  background: #20272e;
}

.section {
  display: flex;
  align-items: center;
  gap: 3px;
  height: 20px;
  padding-left: 4px;
  border: 1px solid #666c72;
  border-radius: 2px;
  background: #565b61;
  color: #f0f1f2;
}

.section span {
  flex: 1;
  text-align: left;
  white-space: nowrap;
}

.section i {
  display: flex;
  align-items: center;
  justify-content: center;
  width: 18px;
  height: 18px;
  border-left: 1px solid #747a80;
}

.config {
  display: flex;
  align-items: center;
  align-self: flex-end;
  gap: 5px;
  padding: 1px 4px 0 0;
  color: #a9adb2;
}

.bottom-tabs {
  display: flex;
  height: 19px;
}

.bottom-tabs button {
  flex: 1;
  padding: 1px 0 0 15px;
  border-top: 2px solid #474f56;
  font-weight: 700;
  text-align: left;
}

.bottom-tabs .active {
  flex: none;
  width: 55px;
  padding: 4px 0 0;
  text-align: center;
  border: 2px solid #474f56;
  border-top: 0;
  border-radius: 0 0 5px 5px;
  background: #20272e;
}

.project {
  flex: 1;
  display: flex;
  min-width: 0;
  border: 2px solid #474f56;
  border-radius: 5px;
  background: #20272e;
}

.tracks {
  flex: none;
  display: flex;
  flex-direction: column;
  width: 289px;
  border-right: 2px solid #474f56;
}

.tracks-head {
  display: flex;
  align-items: center;
  justify-content: flex-end;
  gap: 5px;
  height: 24px;
  padding: 0 3px 2px 0;
  color: #878c92;
}

.mini-group {
  display: flex;
  height: 17px;
  border: 1px solid #6d7379;
  border-radius: 2px;
  background: #565b62;
  color: #f0f1f2;
}

.mini-group button {
  display: flex;
  align-items: center;
  justify-content: center;
  width: 19px;
}

.track {
  display: flex;
  align-items: flex-end;
  gap: 4px;
  margin-bottom: 2px;
  padding-left: 138px;
  border-right: 8px solid #000;
  box-shadow: 0 2px #4a5258;
}

.track.folder {
  height: 16px;
  align-items: center;
  padding-left: 141px;
  font-weight: 700;
}

.track.midi {
  height: 33px;
  padding-bottom: 2px;
}

.track.audio {
  height: 34px;
  padding-bottom: 3px;
  background: #e5e6e7;
}

.chip {
  display: flex;
  align-items: center;
  justify-content: space-around;
  width: 17px;
  height: 13px;
  border: 1px solid #4b5057;
  border-radius: 2px;
  background: #4b5057;
  color: #0c0f13;
}

.chip.wide {
  width: 58px;
  padding: 0 1px;
}

.track.audio .chip {
  background: #f2f2f3;
}

.tracks-foot {
  display: flex;
  align-items: center;
  gap: 6px;
  margin-top: auto;
  padding: 0 4px 1px 9px;
  color: #7b8086;
}

.tracks-foot span {
  flex: 1;
  color: #a9adb2;
}

.arrange {
  flex: 1;
  min-width: 0;
  display: grid;
  grid-template-columns: 1fr 14px;
  grid-template-rows: 1fr 12px;
  padding: 2px 0 0 5px;
}

.timeline {
  position: relative;
  display: flex;
  flex-direction: column;
  min-width: 0;
  overflow: hidden;
}

.timeline svg {
  display: block;
  width: 100%;
}

.ruler {
  flex: none;
  height: 21px;
  background: #85888f;
}

.ruler text {
  fill: #16181c;
  font-size: 11px;
  font-weight: 700;
}

.lane {
  flex: none;
}

.marker {
  height: 18px;
  background: #1f333c;
}

.notes {
  height: 33px;
  border-top: 2px solid #56646a;
  background: #121e25;
}

.clip {
  height: 37px;
  border: solid #a6a8ab;
  border-width: 2px 0;
  background: #8c8d91;
}

.empty {
  flex: 1;
  min-height: 0;
  height: 0;
  background: #20333a;
}

.timeline .playhead {
  position: absolute;
  top: 4px;
  bottom: 0;
  left: 314px;
  width: 3px;
  border: solid #b9babb;
  border-width: 0 1px;
  background: #55595b;
}

.timeline .cursor {
  position: absolute;
  top: 8px;
  left: 107px;
}

.vzoom {
  display: flex;
  flex-direction: column;
  align-items: center;
  gap: 3px;
  padding: 5px 4px 2px 0;
  color: #a9adb2;
}

.vzoom small,
.hzoom small {
  height: 8px;
  font-size: 9px;
  line-height: 8px;
}

.ruler-menu {
  display: flex;
  align-items: center;
  justify-content: center;
  width: 10px;
  height: 11px;
  margin-bottom: 5px;
  background: #9a9da2;
  color: #1f272e;
}

.vline {
  position: relative;
  width: 2px;
  background: #6f757a;
}

.vline.short {
  height: 40px;
  margin-top: 4px;
}

.vline.long {
  flex: 1;
  margin-top: 16px;
}

.vline.zoomer {
  height: 44px;
}

.vline b,
.hline b {
  position: absolute;
  width: 5px;
  height: 5px;
  border-radius: 50%;
  background: #c8cbce;
}

.vline b {
  left: -2px;
  bottom: 5px;
}

.vline.zoomer b {
  top: 4px;
}

.hzoom {
  display: flex;
  grid-column: 1 / 3;
  align-items: center;
  gap: 6px;
  padding: 0 24px 0 12px;
  color: #a9adb2;
}

.hscroll {
  flex: 1;
  height: 2px;
  margin-right: 8px;
  background: #60666b;
}

.hscroll b {
  display: block;
  position: relative;
  top: -1px;
  width: 26px;
  height: 4px;
  border-radius: 2px;
  background: #b4b7ba;
}

.hline {
  position: relative;
  width: 36px;
  height: 1px;
  background: #8a8f94;
}

.hline b {
  right: 11px;
  top: -2px;
}

/* rack */
.rack {
  flex: none;
  display: flex;
  flex-direction: column;
  width: 184px;
}

.rack-tabs {
  display: flex;
  height: 19px;
  margin-bottom: -2px;
  font-weight: 700;
}

.rack-tabs button {
  flex: 1 0 auto;
  padding: 0 6px 2px 4px;
}

.rack-tabs .active {
  position: relative;
  flex: none;
  width: 43px;
  padding: 0 2px 2px 0;
  border: 2px solid #474f56;
  border-bottom: 0;
  border-radius: 5px 5px 0 0;
  background: #20272e;
}

.rack-body {
  flex: 1;
  padding: 8px 6px;
  border: 2px solid #474f56;
  border-radius: 0 5px 5px 5px;
  background: #20272e;
}

.rack-tools {
  display: flex;
  align-items: center;
  justify-content: flex-end;
  gap: 3px;
}

.rack-tools button {
  display: flex;
  align-items: center;
  justify-content: center;
  width: 20px;
  height: 15px;
  border: 1px solid #495056;
  color: #f0f1f2;
}

.rack-tools > button:nth-child(2) {
  margin: 0 31px 0 6px;
}

.rack-tools .pair {
  display: flex;
  border: 1px solid #495056;
}

.rack-tools .pair button {
  width: 19px;
  height: 13px;
  border: 0;
}

.rack-tools .on {
  background: #f1f2f3;
  color: #15181c;
}

.rack-tools .slim {
  width: 12px;
}

.device {
  display: flex;
  height: 130px;
  margin-top: 8px;
  border: 2px solid #a0a2a5;
  border-radius: 3px;
  background: linear-gradient(#55585c, #63666a);
}

.device .number {
  width: 16px;
  padding: 4px 0 0 4px;
  border-right: 1px solid #37393d;
}

.face {
  flex: 1;
  padding: 3px 4px 3px 2px;
}

.screen {
  height: 76px;
  padding: 11px 8px 0 6px;
  border: 2px solid #28292b;
  border-radius: 4px;
  background: #3f4042;
}

.screen-row {
  display: flex;
  align-items: center;
  gap: 2px;
  height: 16px;
  color: #909295;
}

.screen-row strong {
  flex: 1;
  color: #f0f1f2;
  font-size: 9px;
  text-align: center;
}

.screen-row b {
  width: 10px;
  font-size: 8px;
  text-align: center;
}

.screen-row.second {
  padding-right: 10px;
}

.screen .lit {
  padding: 1px;
  background: #e4e5e6;
  color: #47494c;
}

.screen ol {
  display: flex;
  margin: 1px -6px 0 -4px;
  padding: 0;
  list-style: none;
}

.screen li {
  flex: 1;
  color: #d0d2d4;
  font-size: 8px;
  line-height: 13px;
  text-align: center;
}

.screen li span {
  display: block;
}

.knobs {
  display: flex;
  justify-content: space-around;
  margin: 14px 4px 0;
}

.side {
  display: flex;
  flex-direction: column;
  align-items: center;
  justify-content: space-between;
  width: 15px;
  padding: 3px 0;
  border-left: 1px solid #37393d;
}

.rack-foot {
  display: flex;
  justify-content: space-between;
  padding: 3px 24px 1px 25px;
  border-bottom: 2px solid #565d63;
  font-weight: 700;
}

.rack-foot button {
  display: flex;
  align-items: center;
  gap: 4px;
}

/* transport */
.transport {
  display: flex;
  align-items: center;
  gap: 2px;
  height: 33px;
  padding: 2px 5px 0;
  background: #1f282f;
}

.dots {
  width: 2px;
  height: 10px;
  margin: 0 1px;
  border-left: 2px dotted #9ca0a5;
}

.transport .group:first-child {
  margin-right: 2px;
}

.aq .cell:only-child {
  width: 28px;
  font-size: 11px;
}

.locator input {
  width: 98px;
  padding-right: 4px;
  font-size: 12px;
  text-align: right;
}

.locator.first {
  margin-left: 69px;
  margin-right: 3px;
}

.locator + .group:not(.locator) {
  margin-left: 2px;
}

.play-controls {
  display: flex;
  align-items: stretch;
  height: 26px;
  border: 2px solid #a5a9ad;
  border-radius: 3px;
  background: #3d444b;
  color: #eef0f1;
}

.play-controls button {
  display: flex;
  align-items: center;
  justify-content: center;
  width: 40px;
}

.play-controls .small {
  width: 29px;
}

.play-controls .active {
  background: #e6e9f2;
  color: #14171c;
}

.tempo input {
  width: 46px;
  text-align: right;
}

.tempo .spin {
  display: flex;
  flex-direction: column;
  justify-content: center;
  width: 18px;
  padding-left: 5px;
}

.tempo .signature {
  width: 39px;
  border-left: 1px solid #4b5157;
}

.meter {
  width: 60px;
  height: 26px;
  margin: 0 2px;
  padding-left: 17px;
  border-radius: 3px;
  background: #000;
}

.meter i {
  display: block;
  width: 1px;
  height: 100%;
  background: #33373a;
}

/* floating quantize panel */
.panel {
  position: absolute;
  top: 0;
  left: 0;
  width: 289px;
  padding: 3px 3px 3px 4px;
  background: #020306;
}

.panel-head {
  display: flex;
  align-items: flex-start;
  height: 19px;
  margin-bottom: -2px;
}

.panel-head h2 {
  position: relative;
  height: 19px;
  width: 110px;
  margin: 0;
  padding: 1px 0 0 8px;
  border: 2px solid #e9ebec;
  border-bottom: 0;
  border-radius: 5px 5px 0 0;
  background: #20282f;
  color: #f0f1f2;
  font-size: 9px;
  line-height: 14px;
  white-space: nowrap;
}

.grip {
  flex: 1;
  height: 7px;
  margin: 4px 12px 0 6px;
  border: 1px solid #25282c;
  border-width: 1px 0;
}

.panel-close {
  width: 14px;
  color: #f0f1f2;
  font-weight: 700;
}

.panel-body {
  padding: 19px 17px 18px 16px;
  border: 2px solid #e9ebec;
  border-radius: 0 5px 5px 5px;
  background: #20282f;
}

.panel h3 {
  display: flex;
  align-items: center;
  gap: 6px;
  margin: 0 0 13px;
  font-size: 11px;
  line-height: 16px;
}

.panel h3::after {
  content: "";
  flex: 1;
  height: 1px;
  background: #535a60;
}

.preset-row {
  display: flex;
  justify-content: space-between;
  height: 18px;
}

.preset-select {
  display: flex;
  align-items: center;
  width: 203px;
  padding: 0 3px 0 5px;
  background: linear-gradient(#888c92, #71757c);
  color: #15181c;
}

.preset-select select {
  flex: 1;
}

.preset-select .icon {
  color: #4d5157;
}

.preset-buttons {
  display: flex;
  gap: 1px;
}

.preset-buttons button {
  display: flex;
  align-items: center;
  justify-content: center;
  width: 17px;
  background: linear-gradient(#888c92, #71757c);
  color: #2c3036;
}

.params {
  display: grid;
  grid-template-columns: repeat(4, 1fr);
  gap: 1px;
  margin-top: 11px;
}

.params.spread {
  margin-top: 20px;
}

.params.spread .param:last-child {
  grid-column: 4;
}

.param > span {
  display: block;
  height: 17px;
  padding-left: 2px;
  background: #5f636a;
  color: #e2e4e6;
  line-height: 17px;
  text-align: center;
}

.param button {
  display: flex;
  align-items: center;
  width: 100%;
  height: 18px;
  padding-left: 2px;
  color: #f0f1f2;
}

.param strong {
  flex: 1;
}

.param i {
  display: flex;
  flex-direction: column;
  gap: 4px;
}

.param .icon {
  color: #62676d;
}

.beat-grid {
  display: grid;
  grid-template-columns: repeat(16, 1fr);
  height: 50px;
  margin-top: 10px;
  border-right: 1px solid #313840;
  background: #1d242d;
}

.beat-grid span {
  padding: 12px 0 0 1px;
  border-left: 1px solid #313840;
  color: #878c92;
}

.beat-grid .strong {
  border-image: linear-gradient(#74797f 24px, #313840 24px) 1;
  border-width: 0 0 0 1px;
}

.beat-grid .strong:first-child {
  border-image: linear-gradient(#74797f 24px, #67b05f 24px) 1;
}

.modes,
.actions {
  display: flex;
  gap: 1px;
  height: 18px;
  margin-top: 11px;
  color: #22262b;
}

.modes button,
.actions button {
  display: flex;
  align-items: center;
  gap: 4px;
  padding: 0 3px;
  background: linear-gradient(#888b91, #71757c);
}

.modes .mode {
  width: 86px;
}

.modes .active {
  width: 79px;
  background: #e9ebec;
}

.modes .center {
  flex: 1;
  justify-content: center;
}

.actions {
  margin-top: 9px;
}

.actions .reset {
  width: 18px;
  margin-right: auto;
}

.actions .auto {
  justify-content: center;
  width: 38px;
}

.actions .apply {
  justify-content: center;
  width: 78px;
}
</style>
